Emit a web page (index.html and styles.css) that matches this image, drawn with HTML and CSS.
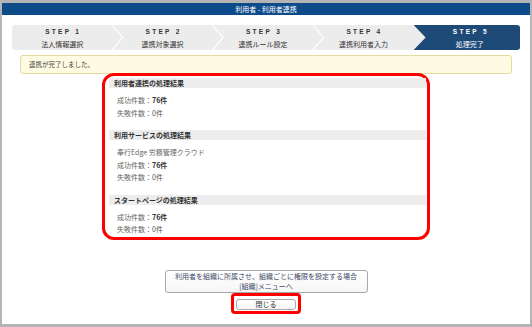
FILE: index.html
```html
<!DOCTYPE html>
<html lang="ja">

<head>
  <meta charset="UTF-8">
  <title>利用者 - 利用者連携</title>
  <link rel="stylesheet" href="styles.css">
</head>

<body>
  <div class="window">
    <div class="titlebar">利用者 - 利用者連携</div>

    <div class="steps">
      <div class="step">
        <span class="step-no">STEP 1</span>
        <span class="step-name">法人情報選択</span>
      </div>
      <div class="step">
        <span class="step-no">STEP 2</span>
        <span class="step-name">連携対象選択</span>
      </div>
      <div class="step">
        <span class="step-no">STEP 3</span>
        <span class="step-name">連携ルール設定</span>
      </div>
      <div class="step step-plain">
        <span class="step-no">STEP 4</span>
        <span class="step-name">連携利用者入力</span>
      </div>
      <div class="step step-current">
        <span class="step-no">STEP 5</span>
        <span class="step-name">処理完了</span>
      </div>
    </div>

    <div class="message">連携が完了しました。</div>

    <div class="results">
      <div class="result">
        <p class="result-title">利用者連携の処理結果</p>
        <p class="row">成功件数：<b>76件</b></p>
        <p class="row">失敗件数：<span>0件</span></p>
      </div>
      <div class="result">
        <p class="result-title">利用サービスの処理結果</p>
        <p class="row">奉行Edge 労務管理クラウド</p>
        <p class="row">成功件数：<b>76件</b></p>
        <p class="row">失敗件数：<span>0件</span></p>
      </div>
      <div class="result">
        <p class="result-title">スタートページの処理結果</p>
        <p class="row">成功件数：<b>76件</b></p>
        <p class="row">失敗件数：<span>0件</span></p>
      </div>
    </div>

    <div class="actions">
      <button type="button" class="btn btn-wide">利用者を組織に所属させ、組織ごとに権限を設定する場合<br>[組織]メニューへ</button>
      <span class="mark">
        <button type="button" class="btn btn-close">閉じる</button>
      </span>
    </div>
  </div>
</body>

</html>
```

FILE: styles.css
```css
html,
body {
  margin: 0;
  background: #fff;
}

body {
  font-family: "Noto Sans CJK JP", "Noto Sans", sans-serif;
  color: #555;
}

.window {
  box-sizing: border-box;
  height: 327px;
  border: 2px solid #b4b4b4;
  border-top-width: 3px;
  border-bottom-width: 3px;
}

.titlebar {
  height: 12px;
  line-height: 12px;
  background-color: #0e4b8b;
  color: #fff;
  font-size: 7px;
  text-align: center;
}

.steps {
  display: flex;
  height: 25px;
  margin: 10px 10px 0;
  background-color: #ececec;
  border-radius: 3px;
  overflow: hidden;
}

.step {
  position: relative;
  flex: 1;
  display: flex;
  flex-direction: column;
  align-items: center;
  padding-top: 1px;
  color: #333;
}

.step::after {
  content: '';
  position: absolute;
  top: 0;
  right: -11px;
  width: 12px;
  height: 100%;
  background-color: #fff;
  clip-path: polygon(0 0, 1.5px 0, 12px 50%, 1.5px 100%, 0 100%, 10.5px 50%);
  z-index: 1;
}

.step-plain::after,
.step-current::after {
  display: none;
}

.step-current {
  background-color: #1e4a78;
  color: #fff;
  padding-left: 6px;
  clip-path: polygon(0 0, 100% 0, 100% 100%, 0 100%, 12px 50%);
}

.step-no {
  font-family: "Liberation Sans", sans-serif;
  font-size: 6.5px;
  font-weight: bold;
  line-height: 12px;
  letter-spacing: 2.3px;
  padding-left: 2px;
}

.step-name {
  font-size: 7px;
  line-height: 12px;
}

.message {
  box-sizing: border-box;
  height: 19px;
  margin: 5px 18px 0;
  padding-left: 8px;
  line-height: 17px;
  font-size: 6.5px;
  color: #444;
  background-color: #fdfbe1;
  border: 1px solid #e4d99e;
  border-radius: 3px;
}

.results {
  width: 328px;
  box-sizing: border-box;
  margin: -1px auto 0;
  padding: 2px 1px 1px 4px;
  border: 3px solid #f00;
  border-radius: 12px;
}

.result {
  margin-bottom: 11px;
}

.result:last-child {
  margin-bottom: 0;
}

.result-title {
  margin: 0 0 6px;
  height: 10px;
  line-height: 10px;
  padding-left: 5px;
  background-color: #ededed;
  font-size: 7px;
  font-weight: bold;
  color: #333;
}

.row {
  margin: 0;
  padding-left: 8px;
  line-height: 12.5px;
  font-size: 7px;
  color: #666;
}

.row b {
  color: #333;
}

.row span {
  color: #555;
}

.actions {
  display: flex;
  flex-direction: column;
  align-items: center;
  margin-top: 30px;
}

.btn {
  font-family: "Noto Sans CJK JP", "Noto Sans", sans-serif;
  font-size: 7px;
  color: #3d4b66;
  background: linear-gradient(#fff, #f6f6f6);
  border: 1px solid #a8a8a8;
  border-radius: 3px;
  padding: 0;
  cursor: pointer;
}

.btn-wide {
  width: 203px;
  height: 23px;
  line-height: 10px;
}

.mark {
  display: inline-flex;
  padding: 3px 2px 1px;
  border: 3px solid #f00;
  border-radius: 4px;
}

.btn-close {
  width: 60px;
  height: 11px;
  line-height: 9px;
  color: #333;
}
```
